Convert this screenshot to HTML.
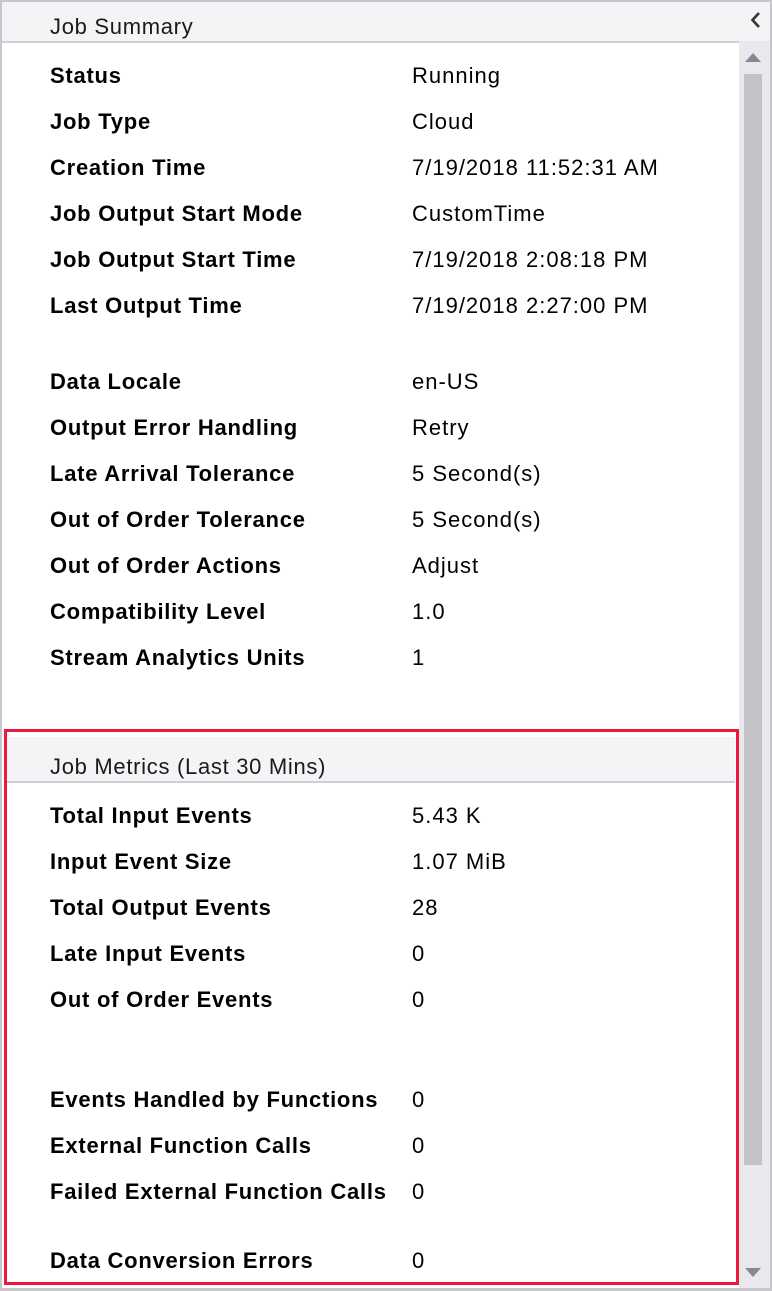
<!DOCTYPE html>
<html><head><meta charset="utf-8"><style>
*{margin:0;padding:0;box-sizing:border-box}
body{width:772px;height:1291px;position:relative;background:#fff;font-family:"Liberation Sans",sans-serif;overflow:hidden;color:#000}
.a{position:absolute;white-space:nowrap;line-height:24px}
.l{left:50px;font-weight:bold;font-size:22px;letter-spacing:0.75px}
.v{left:412px;font-size:22px;letter-spacing:1px}
.h{left:50px;font-size:22px;color:#1a1a1a;letter-spacing:0.7px}
</style></head><body>
<div style="position:absolute;left:0;top:0;width:772px;height:1291px;border:2px solid #c6c6cc;border-bottom-width:3px"></div>
<div style="position:absolute;left:2px;top:2px;width:768px;height:39px;background:#f3f4f6"></div>
<div style="position:absolute;left:2px;top:41px;width:738px;height:2px;background:#cfd0d6"></div>
<div class="a h" style="top:15px">Job Summary</div>
<svg style="position:absolute;left:749px;top:11px" width="14" height="18"><path d="M10 2 L3.5 9 L10 16" stroke="#333" stroke-width="2.6" fill="none"/></svg>
<div style="position:absolute;left:739px;top:41px;width:31px;height:1247px;background:#e8e8ed"></div>
<svg style="position:absolute;left:743px;top:50px" width="20" height="14"><path d="M2 12 L10 3 L18 12Z" fill="#878796"/></svg>
<div style="position:absolute;left:744px;top:74px;width:18px;height:1091px;background:#c2c3c8"></div>
<svg style="position:absolute;left:743px;top:1266px" width="20" height="14"><path d="M2 2 L18 2 L10 11Z" fill="#878796"/></svg>

<div class="a l" style="top:64px">Status</div><div class="a v" style="top:64px">Running</div>
<div class="a l" style="top:110px">Job Type</div><div class="a v" style="top:110px">Cloud</div>
<div class="a l" style="top:156px">Creation Time</div><div class="a v" style="top:156px">7/19/2018 11:52:31 AM</div>
<div class="a l" style="top:202px">Job Output Start Mode</div><div class="a v" style="top:202px">CustomTime</div>
<div class="a l" style="top:248px">Job Output Start Time</div><div class="a v" style="top:248px">7/19/2018 2:08:18 PM</div>
<div class="a l" style="top:294px">Last Output Time</div><div class="a v" style="top:294px">7/19/2018 2:27:00 PM</div>
<div class="a l" style="top:370px">Data Locale</div><div class="a v" style="top:370px">en-US</div>
<div class="a l" style="top:416px">Output Error Handling</div><div class="a v" style="top:416px">Retry</div>
<div class="a l" style="top:462px">Late Arrival Tolerance</div><div class="a v" style="top:462px">5 Second(s)</div>
<div class="a l" style="top:508px">Out of Order Tolerance</div><div class="a v" style="top:508px">5 Second(s)</div>
<div class="a l" style="top:554px">Out of Order Actions</div><div class="a v" style="top:554px">Adjust</div>
<div class="a l" style="top:600px">Compatibility Level</div><div class="a v" style="top:600px">1.0</div>
<div class="a l" style="top:646px">Stream Analytics Units</div><div class="a v" style="top:646px">1</div>

<div style="position:absolute;left:6px;top:737px;width:729px;height:44px;background:#f3f4f6"></div>
<div style="position:absolute;left:6px;top:781px;width:729px;height:2px;background:#cfd0d6"></div>
<div class="a h" style="top:755px">Job Metrics (Last 30 Mins)</div>
<div style="position:absolute;left:4px;top:729px;width:735px;height:556px;border:3px solid #e81b3a"></div>

<div class="a l" style="top:804px">Total Input Events</div><div class="a v" style="top:804px">5.43 K</div>
<div class="a l" style="top:850px">Input Event Size</div><div class="a v" style="top:850px">1.07 MiB</div>
<div class="a l" style="top:896px">Total Output Events</div><div class="a v" style="top:896px">28</div>
<div class="a l" style="top:942px">Late Input Events</div><div class="a v" style="top:942px">0</div>
<div class="a l" style="top:988px">Out of Order Events</div><div class="a v" style="top:988px">0</div>
<div class="a l" style="top:1088px">Events Handled by Functions</div><div class="a v" style="top:1088px">0</div>
<div class="a l" style="top:1134px">External Function Calls</div><div class="a v" style="top:1134px">0</div>
<div class="a l" style="top:1180px">Failed External Function Calls</div><div class="a v" style="top:1180px">0</div>
<div class="a l" style="top:1249px">Data Conversion Errors</div><div class="a v" style="top:1249px">0</div>
</body></html>
